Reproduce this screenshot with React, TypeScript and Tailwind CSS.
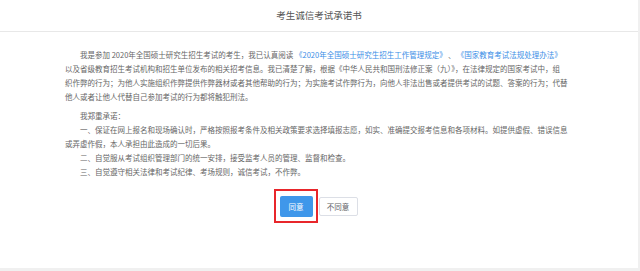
import { useState } from "react";

const FONT =
  "font-['Noto_Sans_CJK_SC','Noto_Sans',Roboto,sans-serif]";

function Link({ children }: { children: React.ReactNode }) {
  return <span className="text-[#3a8ee6]">{children}</span>;
}

export default function App() {
  const [agreed, setAgreed] = useState<boolean | null>(null);

  return (
    <div className={`h-[271px] w-[640px] bg-[#f0f0f0] ${FONT}`}>
      <div className="flex h-[268px] w-[638px] flex-col bg-white">
        <div className="flex h-[32px] shrink-0 items-center justify-center border-b border-[#e8e8e8]">
          <span className="text-[9.5px] leading-none text-[#555]">
            考生诚信考试承诺书
          </span>
        </div>

        <div className="ml-[65px] w-[520px] whitespace-nowrap pt-[16px] text-[7.5px] leading-[14px] text-[#666]">
          <p className="indent-[15px]">
            我是参加 2020年全国硕士研究生招生考试的考生，我已认真阅读&nbsp;
            <Link>《2020年全国硕士研究生招生工作管理规定》</Link>
            <span className="px-[5px]">、</span>
            <Link>《国家教育考试法规处理办法》</Link>
            <br />
            以及省级教育招生考试机构和招生单位发布的相关招考信息。我已清楚了解，根据《中华人民共和国刑法修正案（九）》，在法律规定的国家考试中，组
            <br />
            织作弊的行为；为他人实施组织作弊提供作弊器材或者其他帮助的行为；为实施考试作弊行为，向他人非法出售或者提供考试的试题、答案的行为；代替
            <br />
            他人或者让他人代替自己参加考试的行为都将触犯刑法。
          </p>
          <div className="mt-[5px]">
            <p className="indent-[15px]">我郑重承诺：</p>
            <p className="indent-[15px]">
              一、保证在网上报名和现场确认时，严格按照报考条件及相关政策要求选择填报志愿，如实、准确提交报考信息和各项材料。如提供虚假、错误信息
              <br />
              或弄虚作假，本人承担由此造成的一切后果。
            </p>
            <p className="indent-[15px]">
              二、自觉服从考试组织管理部门的统一安排，接受监考人员的管理、监督和检查。
            </p>
            <p className="indent-[15px]">
              三、自觉遵守相关法律和考试纪律、考场规则，诚信考试，不作弊。
            </p>
          </div>
        </div>

        <div className="mt-[17px] flex justify-center gap-[6px] pr-[1px]">
          <button
            onClick={() => setAgreed(true)}
            className="relative h-[21px] w-[33px] rounded-[2px] bg-[#3f97ea] text-[7.5px] text-white"
          >
            同意
            <span className="pointer-events-none absolute -top-[7px] -bottom-[6px] -left-[6px] -right-[5px] border-2 border-[#e8262b]" />
          </button>
          <button
            onClick={() => setAgreed(false)}
            className={`h-[19px] w-[39px] self-center rounded-[2px] border border-[#dcdfe6] bg-white text-[7.5px] ${
              agreed === false ? "text-[#3a8ee6]" : "text-[#606266]"
            }`}
          >
            不同意
          </button>
        </div>
      </div>
    </div>
  );
}
